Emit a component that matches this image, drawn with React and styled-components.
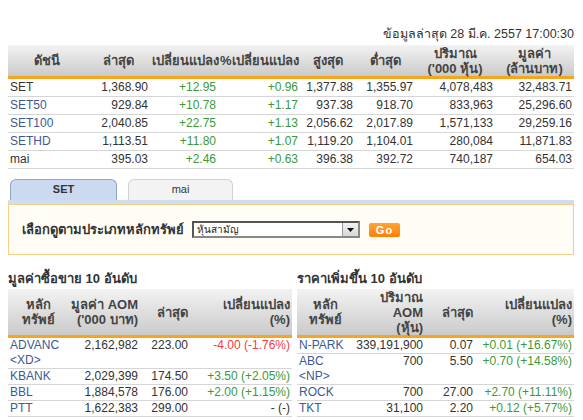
import React from 'react';
import styled, { createGlobalStyle } from 'styled-components';

const Global = createGlobalStyle`
  body {
    margin: 8px;
    font-family: "Liberation Sans", Arial, "Noto Sans", sans-serif;
    font-size: 12px;
    color: #333;
    background: #fff;
  }
`;

const Page = styled.div`
  width: 566px;
`;

const DateLine = styled.div`
  margin-top: 18px;
  height: 16px;
  line-height: 16px;
  padding-bottom: 3px;
  text-align: right;
  font-size: 12.5px;
  color: #333;
`;

const DataTable = styled.table`
  width: 100%;
  border-collapse: collapse;
  table-layout: fixed;
`;

const Th = styled.th`
  background: linear-gradient(#f3f3f3, #cacaca);
  border-bottom: 3px solid #f6a51f;
  font-weight: bold;
  font-size: 13px;
  color: #444;
  height: ${(p) => p.$h || 31}px;
  padding: 0 2px;
  line-height: 15px;
  text-align: ${(p) => p.$align || 'center'};
  vertical-align: middle;
  white-space: nowrap;
`;

const Td = styled.td`
  padding: 0 2px;
  line-height: ${(p) => p.$lh || 17}px;
  border-bottom: 1px solid #d6d6d6;
  text-align: ${(p) => p.$align || 'right'};
  color: ${(p) => p.$color || '#333'};
  white-space: nowrap;
  vertical-align: top;
  overflow: visible;
`;

const TabBar = styled.div`
  display: flex;
  gap: 11px;
  padding-left: 2px;
  margin-top: 10px;
  border-bottom: 4px solid #cfdcf2;
`;

const Tab = styled.div`
  width: ${(p) => p.$w}px;
  height: 21px;
  box-sizing: border-box;
  border: 1px solid ${(p) => (p.$active ? '#8fa7c9' : '#d2d2d2')};
  border-bottom: none;
  border-radius: 6px 6px 0 0;
  background: ${(p) => (p.$active ? '#cbdaf1' : '#f3f3f3')};
  text-align: center;
  line-height: 19px;
  font-size: 11px;
  font-weight: ${(p) => (p.$active ? 'bold' : 'normal')};
  color: #333;
`;

const FilterBox = styled.div`
  height: 49px;
  border: 1px solid #f6cf86;
  background: #fffdf5;
  display: flex;
  align-items: center;
  padding-left: 13px;
`;

const FilterLabel = styled.span`
  font-weight: bold;
  font-size: 13px;
  color: #333;
  margin-right: 8px;
`;

const SelectBox = styled.div`
  width: 168px;
  height: 17px;
  box-sizing: border-box;
  border: 2px solid #555;
  border-right-color: #888;
  border-bottom-color: #888;
  background: #fff;
  display: flex;
  align-items: stretch;
`;

const SelectText = styled.span`
  flex: 1;
  font-size: 10px;
  line-height: 13px;
  padding-left: 3px;
  color: #222;
`;

const SelectArrow = styled.span`
  width: 15px;
  background: linear-gradient(#f2f2f2, #d8d8d8);
  border-left: 1px solid #999;
  display: flex;
  align-items: center;
  justify-content: center;
`;

const GoButton = styled.span`
  margin-left: 9px;
  width: 31px;
  height: 14px;
  border-radius: 2px;
  background: linear-gradient(#ffa43a, #ff8000);
  color: #fff;
  font-size: 11px;
  font-weight: bold;
  line-height: 14px;
  text-align: center;
  letter-spacing: 1px;
`;

const Lower = styled.div`
  display: flex;
  gap: 5px;
  margin-top: 16px;
`;

const Panel = styled.div`
  width: ${(p) => p.$w}px;
`;

const PanelTitle = styled.div`
  font-weight: bold;
  font-size: 13px;
  height: 18px;
  line-height: 16px;
  color: #333;
`;

const LINK = '#3c5a93';
const GREEN = '#3a9a3a';
const RED = '#f23c3c';

const indexRows = [
  ['SET', '1,368.90', '+12.95', '+0.96', '1,377.88', '1,355.97', '4,078,483', '32,483.71', '#333'],
  ['SET50', '929.84', '+10.78', '+1.17', '937.38', '918.70', '833,963', '25,296.60', LINK],
  ['SET100', '2,040.85', '+22.75', '+1.13', '2,056.62', '2,017.89', '1,571,133', '29,259.16', LINK],
  ['SETHD', '1,113.51', '+11.80', '+1.07', '1,119.20', '1,104.01', '280,084', '11,871.83', LINK],
  ['mai', '395.03', '+2.46', '+0.63', '396.38', '392.72', '740,187', '654.03', '#333'],
];

const valueRows = [
  ['ADVANC', '<XD>', '2,162,982', '223.00', '-4.00 (-1.76%)', RED],
  ['KBANK', null, '2,029,399', '174.50', '+3.50 (+2.05%)', GREEN],
  ['BBL', null, '1,884,578', '176.00', '+2.00 (+1.15%)', GREEN],
  ['PTT', null, '1,622,383', '299.00', '- (-)', '#333'],
];

const gainRows = [
  ['N-PARK', null, '339,191,900', '0.07', '+0.01 (+16.67%)'],
  ['ABC', '<NP>', '700', '5.50', '+0.70 (+14.58%)'],
  ['ROCK', null, '700', '27.00', '+2.70 (+11.11%)'],
  ['TKT', null, '31,100', '2.20', '+0.12 (+5.77%)'],
];

function SymbolCell({ name, tag }) {
  return (
    <Td $align="left" $color={LINK} $lh={15}>
      {name}
      {tag && (
        <>
          <br />
          {tag}
        </>
      )}
    </Td>
  );
}

export default function App() {
  return (
    <Page>
      <Global />
      <DateLine>ข้อมูลล่าสุด 28 มี.ค. 2557 17:00:30</DateLine>
      <DataTable>
        <colgroup>
          <col style={{ width: 78 }} />
          <col style={{ width: 64 }} />
          <col style={{ width: 68 }} />
          <col style={{ width: 82 }} />
          <col style={{ width: 55 }} />
          <col style={{ width: 60 }} />
          <col style={{ width: 80 }} />
          <col style={{ width: 79 }} />
        </colgroup>
        <thead>
          <tr>
            <Th>ดัชนี</Th>
            <Th>ล่าสุด</Th>
            <Th>เปลี่ยนแปลง</Th>
            <Th>%เปลี่ยนแปลง</Th>
            <Th>สูงสุด</Th>
            <Th>ต่ำสุด</Th>
            <Th>
              ปริมาณ
              <br />
              ('000 หุ้น)
            </Th>
            <Th>
              มูลค่า
              <br />
              (ล้านบาท)
            </Th>
          </tr>
        </thead>
        <tbody>
          {indexRows.map((r) => (
            <tr key={r[0]}>
              <Td $align="left" $color={r[8]}>{r[0]}</Td>
              <Td>{r[1]}</Td>
              <Td $color={GREEN}>{r[2]}</Td>
              <Td $color={GREEN}>{r[3]}</Td>
              <Td>{r[4]}</Td>
              <Td>{r[5]}</Td>
              <Td>{r[6]}</Td>
              <Td>{r[7]}</Td>
            </tr>
          ))}
        </tbody>
      </DataTable>

      <TabBar>
        <Tab $active $w={107}>SET</Tab>
        <Tab $w={105}>mai</Tab>
      </TabBar>
      <FilterBox>
        <FilterLabel>เลือกดูตามประเภทหลักทรัพย์</FilterLabel>
        <SelectBox>
          <SelectText>หุ้นสามัญ</SelectText>
          <SelectArrow>
            <svg width="7" height="4" viewBox="0 0 7 4">
              <polygon points="0,0 7,0 3.5,4" fill="#111" />
            </svg>
          </SelectArrow>
        </SelectBox>
        <GoButton>Go</GoButton>
      </FilterBox>

      <Lower>
        <Panel $w={284}>
          <PanelTitle>มูลค่าซื้อขาย 10 อันดับ</PanelTitle>
          <DataTable>
            <colgroup>
              <col style={{ width: 60 }} />
              <col style={{ width: 72 }} />
              <col style={{ width: 50 }} />
              <col style={{ width: 102 }} />
            </colgroup>
            <thead>
              <tr>
                <Th $h={46}>
                  หลัก
                  <br />
                  ทรัพย์
                </Th>
                <Th $h={46} $align="right">
                  มูลค่า AOM
                  <br />
                  ('000 บาท)
                </Th>
                <Th $h={46} $align="right">ล่าสุด</Th>
                <Th $h={46} $align="right">
                  เปลี่ยนแปลง
                  <br />
                  (%)
                </Th>
              </tr>
            </thead>
            <tbody>
              {valueRows.map((r) => (
                <tr key={r[0]}>
                  <SymbolCell name={r[0]} tag={r[1]} />
                  <Td $lh={15}>{r[2]}</Td>
                  <Td $lh={15}>{r[3]}</Td>
                  <Td $lh={15} $color={r[5]}>{r[4]}</Td>
                </tr>
              ))}
            </tbody>
          </DataTable>
        </Panel>
        <Panel $w={277}>
          <PanelTitle>ราคาเพิ่มขึ้น 10 อันดับ</PanelTitle>
          <DataTable>
            <colgroup>
              <col style={{ width: 56 }} />
              <col style={{ width: 72 }} />
              <col style={{ width: 50 }} />
              <col style={{ width: 99 }} />
            </colgroup>
            <thead>
              <tr>
                <Th $h={46}>
                  หลัก
                  <br />
                  ทรัพย์
                </Th>
                <Th $h={46} $align="right">
                  ปริมาณ
                  <br />
                  AOM
                  <br />
                  (หุ้น)
                </Th>
                <Th $h={46} $align="right">ล่าสุด</Th>
                <Th $h={46} $align="right">
                  เปลี่ยนแปลง
                  <br />
                  (%)
                </Th>
              </tr>
            </thead>
            <tbody>
              {gainRows.map((r) => (
                <tr key={r[0]}>
                  <SymbolCell name={r[0]} tag={r[1]} />
                  <Td $lh={15}>{r[2]}</Td>
                  <Td $lh={15}>{r[3]}</Td>
                  <Td $lh={15} $color={GREEN}>{r[4]}</Td>
                </tr>
              ))}
            </tbody>
          </DataTable>
        </Panel>
      </Lower>
    </Page>
  );
}
